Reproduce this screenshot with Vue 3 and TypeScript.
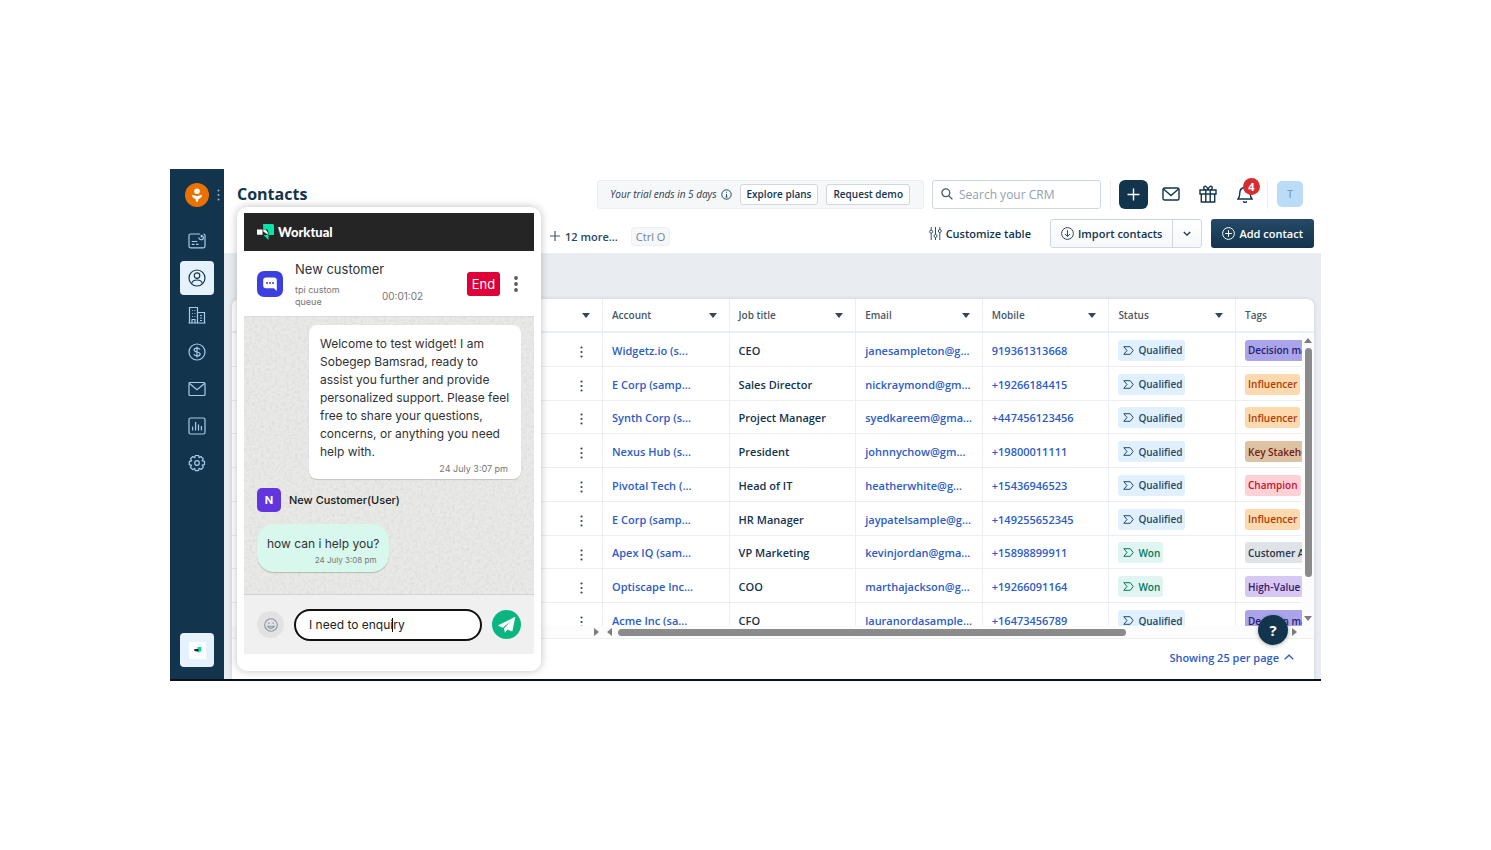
<script setup lang="ts">
import { ref } from 'vue'

interface Contact {
  account: string
  title: string
  email: string
  mobile: string
  status: 'Qualified' | 'Won'
  tag: string
  tone: string
}

const columns = ['Account', 'Job title', 'Email', 'Mobile', 'Status']

const contacts: Contact[] = [
  { account: 'Widgetz.io (s...', title: 'CEO', email: 'janesampleton@g...', mobile: '919361313668', status: 'Qualified', tag: 'Decision maker', tone: 'indigo' },
  { account: 'E Corp (samp...', title: 'Sales Director', email: 'nickraymond@gm...', mobile: '+19266184415', status: 'Qualified', tag: 'Influencer', tone: 'orange' },
  { account: 'Synth Corp (s...', title: 'Project Manager', email: 'syedkareem@gma...', mobile: '+447456123456', status: 'Qualified', tag: 'Influencer', tone: 'orange' },
  { account: 'Nexus Hub (s...', title: 'President', email: 'johnnychow@gm...', mobile: '+19800011111', status: 'Qualified', tag: 'Key Stakeholder', tone: 'brown' },
  { account: 'Pivotal Tech (...', title: 'Head of IT', email: 'heatherwhite@g...', mobile: '+15436946523', status: 'Qualified', tag: 'Champion', tone: 'pink' },
  { account: 'E Corp (samp...', title: 'HR Manager', email: 'jaypatelsample@g...', mobile: '+149255652345', status: 'Qualified', tag: 'Influencer', tone: 'orange' },
  { account: 'Apex IQ (sam...', title: 'VP Marketing', email: 'kevinjordan@gma...', mobile: '+15898899911', status: 'Won', tag: 'Customer Advocate', tone: 'grey' },
  { account: 'Optiscape Inc...', title: 'COO', email: 'marthajackson@g...', mobile: '+19266091164', status: 'Won', tag: 'High-Value', tone: 'violet' },
  { account: 'Acme Inc (sa...', title: 'CFO', email: 'lauranordasample...', mobile: '+16473456789', status: 'Qualified', tag: 'Decision maker', tone: 'indigo' },
]

const search = ref('')
const draft = ref('I need to enquiry')
</script>

<template>
  <div class="page">
    <div class="app">
      <nav class="sidebar" aria-label="Main">
        <div class="brand">
          <svg width="24" height="24" viewBox="0 0 24 24"><circle cx="12" cy="12" r="12" fill="#e97203" /><circle cx="12" cy="8.200" r="2.800" fill="#fff" /><path d="M6.700 11.800c3.200 1.500 7.400 1.500 10.600 0-.3 2.300-1.900 3.700-3.900 4.200l-.5 2.700h-1.800l-.5-2.700c-2-.5-3.600-1.900-3.900-4.200z" fill="#fff" /></svg>
          <svg class="grip" width="3" height="12" viewBox="0 0 3 12" fill="#9db4c8"><circle cx="1.500" cy="1.500" r="1" /><circle cx="1.500" cy="6" r="1" /><circle cx="1.500" cy="10.500" r="1" /></svg>
        </div>
        <a class="item" href="#home" aria-label="Home"><svg width="18" height="18" viewBox="0 0 18 18"><path d="M12 2H2.500C1.500 2 1 2.500 1 3.500v10.800c0 1 .5 1.500 1.500 1.500h13c1 0 1.500-.5 1.500-1.500V3.500C17 2.500 16.500 2 15.500 2M3.800 9.500h5.500M3.800 12.300h2.700M8 12.300h2.500M10.800 5.500c.3 3 4.600 3 4.600 0 0-1.300-.8-2-2.100-2.200V5.500" /></svg></a>
        <a class="item active" href="#contacts" aria-label="Contacts"><svg width="18" height="18" viewBox="0 0 18 18"><circle cx="9" cy="9" r="8" /><circle cx="9" cy="6.600" r="2.800" /><path d="M3.600 14.600c.6-2.600 2.500-3.600 5.400-3.600s4.800 1 5.400 3.600" /></svg></a>
        <a class="item" href="#accounts" aria-label="Accounts"><svg width="18" height="18" viewBox="0 0 18 18"><path d="M.5 17h17M1.500 17V1.500h8V17M9.500 6.500h7V17M4 4.500h.8M6.500 4.500h.8M4 7.500h.8M6.500 7.500h.8M4 10.500h.8M6.500 10.500h.8M4 17v-3.500h3V17M12 9.500h2M12 12h2M12 14.500h2" /></svg></a>
        <a class="item" href="#deals" aria-label="Deals"><svg width="18" height="18" viewBox="0 0 18 18"><circle cx="9" cy="9" r="8" /><path d="M9 3.500v11M12 6.500c-.5-1-1.500-1.400-3-1.400-1.700 0-2.900.7-2.900 1.900 0 2.800 6 1.200 6 4 0 1.200-1.200 2-3 2-1.600 0-2.700-.6-3.200-1.700" /></svg></a>
        <a class="item" href="#email" aria-label="Email"><svg width="18" height="18" viewBox="0 0 18 18"><rect x="1" y="2.500" width="16" height="13" rx="1" /><path d="M1.500 3.500 9 9.800l7.500-6.300" /></svg></a>
        <a class="item" href="#reports" aria-label="Reports"><svg width="18" height="18" viewBox="0 0 18 18"><rect x="1" y="1" width="16" height="16" rx="1.500" /><path d="M4.700 9.500v4M7.600 5v8.500M10.500 7.500v6M13.400 9v4.500" /></svg></a>
        <a class="item" href="#settings" aria-label="Settings"><svg width="18" height="18" viewBox="0 0 18 18"><path d="M7.400 1.500h3.200l.5 2.200 1.900-1.200 2.300 2.300-1.200 1.900 2.400.6v3.300l-2.300.6 1.200 2-2.300 2.300-2-1.200-.6 2.400H7.300l-.6-2.300-2 1.200-2.300-2.300 1.200-2-2.300-.6V7.400l2.300-.6-1.200-2 2.300-2.300 2 1.200z" stroke-linejoin="round" /><circle cx="9" cy="9" r="2.300" /></svg></a>
        <a class="item widget-link" href="#worktual" aria-label="Worktual"><svg width="17" height="17" viewBox="0 0 17 17"><path fill="#fff" d="M0 0h17v17H0z" /><path fill="#06dc9f" d="M8.500 5h3.800v4.500h-2V11l-2-2z" /><path fill="#1c2c35" d="M5.300 7h4.200v2.600H8L5.300 9z" /></svg></a>
      </nav>

      <main class="main">
        <header class="topbar">
          <h1>Contacts</h1>
          <div class="trial">
            <em>Your trial ends in 5 days</em>
            <svg width="11" height="11" viewBox="0 0 11 11" fill="none" stroke="#264966"><circle cx="5.500" cy="5.500" r="4.700" /><path d="M5.500 5v3M5.500 2.800v1M4.500 8h2" /></svg>
            <button type="button">Explore plans</button>
            <button type="button">Request demo</button>
          </div>
          <label class="search">
            <svg width="12" height="12" viewBox="0 0 12 12" fill="none" stroke="#475867" stroke-width="1.300"><circle cx="4.800" cy="4.800" r="3.900" /><path d="m7.700 7.700 3.700 3.700" /></svg>
            <input v-model="search" type="search" placeholder="Search your CRM" aria-label="Search your CRM">
          </label>
          <span class="rule" />
          <button class="plus" type="button" aria-label="Create"><svg width="13" height="13" viewBox="0 0 13 13" stroke="#fff" stroke-width="1.400"><path d="M6.500 .5v12M.5 6.500h12" /></svg></button>
          <button class="icon mail" type="button" aria-label="Mail"><svg width="18" height="14" viewBox="0 0 18 14"><rect x="1" y="1" width="16" height="12" rx="1.500" /><path d="M1.500 2 9 8.500 16.500 2" /></svg></button>
          <button class="icon gift" type="button" aria-label="Gifts"><svg width="18" height="18" viewBox="0 0 18 18"><path d="M1 5h16v4H1zM2.300 9h13.400v8H2.300zM6.800 5v12M11.200 5v12M9 5C5.500 5 4.500 4 4.800 2.500 5.300.5 8.300.5 9 5c.7-4.500 3.700-4.500 4.200-2.500C13.500 4 12.500 5 9 5z" /></svg></button>
          <button class="icon bell" type="button" aria-label="Notifications, 4 new"><svg width="16" height="18" viewBox="0 0 16 18"><path d="M1 14c1.600-1.500 1.800-2.800 1.800-6C2.800 4.500 5 2.500 8 2.500s5.200 2 5.200 5.500c0 3.200.2 4.500 1.800 6zM6 16.500c1 .8 3 .8 4 0" /></svg><span class="badge">4</span></button>
          <span class="rule second" />
          <button class="avatar" type="button" aria-label="Profile">T</button>
        </header>

        <div class="toolbar">
          <button class="more" type="button"><svg width="10" height="10" viewBox="0 0 10 10" stroke="#475867" stroke-width="1.200"><path d="M5 0v10M0 5h10" /></svg>12 more...</button>
          <kbd>Ctrl O</kbd>
          <button class="customize" type="button"><svg width="13" height="13" viewBox="0 0 13 13" fill="none" stroke="#33536d"><path d="M2.200 0v3.200M2.200 6.200V13M6.500 0v7.500M6.500 10.500V13M10.800 0v2.500M10.800 5.500V13" /><circle cx="2.200" cy="4.700" r="1.500" /><circle cx="6.500" cy="9" r="1.500" /><circle cx="10.800" cy="4" r="1.500" /></svg>Customize table</button>
          <div class="split">
            <button type="button"><svg width="13" height="13" viewBox="0 0 13 13" fill="none" stroke="#33475b"><circle cx="6.500" cy="6.500" r="5.900" /><path d="M6.500 3.200v6M4 7l2.500 2.500L9 7" /></svg>Import contacts</button>
            <button class="drop" type="button" aria-label="More import options"><svg width="8" height="6" viewBox="0 0 8 6" fill="none" stroke="#12344d" stroke-width="1.300"><path d="m.8 1 3.200 3.200L7.200 1" /></svg></button>
          </div>
          <button class="add" type="button"><svg width="13" height="13" viewBox="0 0 13 13" fill="none" stroke="#fff"><circle cx="6.500" cy="6.500" r="5.900" /><path d="M6.500 3.200v6.600M3.200 6.500h6.600" /></svg>Add contact</button>
        </div>

        <div class="canvas">
          <section class="card">
            <div class="viewport">
              <table>
                <colgroup><col class="name-col"><col v-for="c in columns" :key="c"><col class="tag-col"></colgroup>
                <thead>
                  <tr>
                    <th aria-label="Name"><span class="head"><i class="caret" /></span></th>
                    <th v-for="c in columns" :key="c"><span class="head">{{ c }}<i class="caret" /></span></th>
                    <th>Tags</th>
                  </tr>
                </thead>
                <tbody>
                  <tr v-for="(p, i) in contacts" :key="i">
                    <td class="menu-cell"><button type="button" aria-label="Row actions"><svg width="3" height="12" viewBox="0 0 3 12" fill="#33475b"><circle cx="1.500" cy="1.500" r="1.100" /><circle cx="1.500" cy="6" r="1.100" /><circle cx="1.500" cy="10.500" r="1.100" /></svg></button></td>
                    <td><a href="#account">{{ p.account }}</a></td>
                    <td>{{ p.title }}</td>
                    <td><a href="#email">{{ p.email }}</a></td>
                    <td><a href="#call">{{ p.mobile }}</a></td>
                    <td><span class="status" :class="p.status.toLowerCase()"><svg width="11" height="9" viewBox="0 0 11 9" fill="none" stroke="currentColor"><path d="M.8.700h6.400L10.200 4.500 7.200 8.300H.8L4 4.500z" /></svg>{{ p.status }}</span></td>
                    <td><span class="tag" :class="p.tone">{{ p.tag }}</span></td>
                  </tr>
                </tbody>
              </table>
              <div class="vscroll"><i class="up" /><i class="thumb" /><i class="down" /></div>
            </div>
            <div class="hscroll"><i class="right" /><i class="left" /><i class="thumb" /><i class="rest" /><i class="right" /></div>
            <footer class="pager"><button type="button">Showing 25 per page<svg width="10" height="6" viewBox="0 0 10 6" fill="none" stroke="#2c5cc5" stroke-width="1.300"><path d="m.7 5.200 4.300-4 4.300 4" /></svg></button></footer>
            <button class="help" type="button" aria-label="Help">?</button>
          </section>
        </div>
      </main>

      <aside class="chat" aria-label="Chat">
        <div class="chat-brand">
          <svg width="17" height="16" viewBox="0 0 17 16"><path fill="#06e5a5" d="M6 0h9.500c.8 0 1.500.7 1.500 1.500V11h-5.500v5L6.500 11z" /><path fill="#252525" d="M5 5.500h5.500c1 2 1 3.500 1 5.500L5 11z" /><path fill="#fff" d="M0 5.500h5.500v5.200H0zM6.300 5.500c3.200 0 4.700 2 4.700 5.200L6.300 7.500z" /></svg>
          <strong>Worktual</strong>
        </div>
        <div class="chat-head">
          <svg width="26" height="26" viewBox="0 0 26 26"><rect width="26" height="26" rx="7" fill="#3b3fe0" /><path d="M9 6.500h8c1.800 0 2.800 1 2.800 2.800v10.600l-2.900-2.600H9c-1.800 0-2.800-1-2.800-2.800V9.300c0-1.800 1-2.800 2.800-2.800z" fill="#fff" /><g fill="#3b3fe0"><circle cx="10" cy="12" r="1" /><circle cx="13" cy="12" r="1" /><circle cx="16" cy="12" r="1" /></g></svg>
          <div class="who">
            <h2>New customer</h2>
            <div class="meta"><span>tpi custom queue</span><time>00:01:02</time></div>
          </div>
          <button class="end" type="button">End</button>
          <button class="dots" type="button" aria-label="More"><svg width="4" height="16" viewBox="0 0 4 16" fill="#5b5b5b"><circle cx="2" cy="2" r="1.900" /><circle cx="2" cy="8" r="1.900" /><circle cx="2" cy="14" r="1.900" /></svg></button>
        </div>
        <div class="thread">
          <svg class="grain" width="100%" height="100%" aria-hidden="true"><filter id="grain"><feTurbulence type="fractalNoise" baseFrequency="0.35" numOctaves="2" seed="4" /><feColorMatrix values="0 0 0 0 .45  0 0 0 0 .45  0 0 0 0 .43  .5 0 0 0 -.2" /></filter><rect width="100%" height="100%" filter="url(#grain)" /></svg>
          <div class="bubble agent">
            <p>Welcome to test widget! I am Sobegep Bamsrad, ready to assist you further and provide personalized support. Please feel free to share your questions, concerns, or anything you need help with.</p>
            <time>24 July 3:07 pm</time>
          </div>
          <div class="sender"><span class="initial">N</span>New Customer(User)</div>
          <div class="bubble user">
            <p>how can i help you?</p>
            <time>24 July 3:08 pm</time>
          </div>
        </div>
        <form class="composer" @submit.prevent>
          <button class="emoji" type="button" aria-label="Emoji"><svg width="14" height="14" viewBox="0 0 14 14" fill="none" stroke="#8a949e" stroke-width="1.100"><circle cx="7" cy="7" r="6.300" /><path d="M3.800 8.300c1 2.700 5.400 2.700 6.400 0z" /><path d="M4.800 4.500v1.300M9.200 4.500v1.300" stroke-width="1.500" /></svg></button>
          <div class="field"><input v-model="draft" type="text" aria-label="Message"><i class="cursor" /></div>
          <button class="send" type="submit" aria-label="Send"><svg width="19" height="18" viewBox="0 0 19 18" fill="#fff"><path d="M18.300.8 15.300 15.500l-4.800-2-2.600 3.300-.9-4.300 7-7.500-8.200 6.700L.8 9.600z" /></svg></button>
        </form>
      </aside>
    </div>
  </div>
</template>

<style>
body {
  margin: 0;
  background: #fff;
}
</style>

<style scoped>
* {
  box-sizing: border-box;
}

.page {
  padding: 169px 170px;
  font-family: "Open Sans", "Noto Sans", sans-serif;
  font-size: 11px;
  font-weight: 600;
  color: #12344d;
}

button {
  display: inline-flex;
  align-items: center;
  justify-content: center;
  margin: 0;
  padding: 0;
  border: 0;
  background: none;
  color: inherit;
  font: inherit;
  white-space: nowrap;
}

a {
  color: #2c5cc5;
  text-decoration: none;
}

svg {
  display: block;
  flex: none;
}

.app {
  position: relative;
  display: flex;
  border-bottom: 2px solid #0b1119;
}

.sidebar {
  display: flex;
  flex: none;
  flex-direction: column;
  align-items: center;
  gap: 3px;
  width: 54px;
  padding-bottom: 12px;
  background: #12344d;
}

.brand {
  position: relative;
  display: flex;
  align-items: center;
  justify-content: center;
  width: 100%;
  height: 52px;
}

.grip {
  position: absolute;
  right: 4px;
}

.item {
  display: flex;
  align-items: center;
  justify-content: center;
  width: 34px;
  height: 34px;
  border-radius: 4px;
}

.item svg {
  fill: none;
  stroke: #a9cbea;
  stroke-width: 1.2;
}

.item.active,
.widget-link {
  background: #e5f2fd;
}

.item.active svg {
  stroke: #12344d;
}

.widget-link {
  margin-top: auto;
}

.widget-link svg {
  stroke: none;
}

.main {
  flex: 1;
  min-width: 0;
}

.topbar {
  display: flex;
  align-items: center;
  height: 50px;
  padding: 0 18px 0 13px;
}

h1 {
  margin: 0 auto 0 0;
  font-size: 16px;
  font-weight: 700;
}

.trial {
  display: flex;
  align-items: center;
  height: 29px;
  padding: 0 13px 0 12px;
  border: 1px solid #ebeff3;
  border-radius: 3px;
  background: #f5f7f9;
}

.trial em {
  margin-right: 4px;
  color: #313b45;
  font-size: 10px;
  font-weight: 500;
}

.trial button {
  height: 21px;
  margin-left: 8px;
  padding: 0 6px;
  border: 1px solid #cfd7df;
  border-radius: 3px;
  background: #fff;
  font-size: 10px;
}

.search {
  display: flex;
  align-items: center;
  gap: 6px;
  width: 169px;
  height: 29px;
  margin: 0 9px 0 8px;
  padding: 0 8px;
  border: 1px solid #cfd7df;
  border-radius: 3px;
}

.search input {
  flex: 1;
  min-width: 0;
  padding: 0;
  border: 0;
  outline: 0;
  background: none;
  color: inherit;
  font: inherit;
  font-size: 12px;
  font-weight: 400;
}

.search input::placeholder {
  color: #92a2b1;
  opacity: 1;
}

.rule {
  width: 1px;
  height: 29px;
  margin-right: 8px;
  background: #ebeff3;
}

.rule.second {
  margin: 0 9px 0 14px;
}

.plus {
  width: 29px;
  height: 29px;
  border-radius: 6px;
  background: #12344d;
}

.icon svg {
  fill: none;
  stroke: #12344d;
  stroke-width: 1.4;
}

.mail {
  margin-left: 14px;
}

.gift {
  margin-left: 19px;
}

.bell {
  position: relative;
  margin-left: 20px;
}

.badge {
  position: absolute;
  top: -7px;
  right: -7px;
  width: 17px;
  height: 17px;
  border-radius: 50%;
  background: #d72d30;
  color: #fff;
  font-size: 11px;
  font-weight: 700;
  line-height: 17px;
}

.avatar {
  width: 26px;
  height: 26px;
  border-radius: 5px;
  background: #bbdcf9;
  color: #7d9fc0;
  font-size: 10px;
}

.toolbar {
  display: flex;
  height: 34px;
  padding: 0 7px 5px 326px;
}

.more {
  gap: 5px;
  height: 34px;
  color: #264966;
}

kbd {
  height: 19px;
  margin: 8px auto 0 13px;
  padding: 0 4px;
  border: 1px solid #ebeff3;
  border-radius: 4px;
  background: #f5f7f9;
  color: #6f8497;
  font: 400 11px/17px "Open Sans", "Noto Sans", sans-serif;
}

.customize {
  gap: 4px;
  height: 29px;
  margin-right: 19px;
}

.split {
  display: flex;
  height: 29px;
  margin-right: 9px;
  border: 1px solid #cfd7df;
  border-radius: 3px;
  background: linear-gradient(#fff, #f5f7f9);
}

.split button {
  gap: 4px;
  padding: 0 10px;
}

.split .drop {
  width: 29px;
  padding: 0;
  border-left: 1px solid #cfd7df;
}

.add {
  gap: 4px;
  height: 29px;
  padding: 0 11px;
  border-radius: 3px;
  background: linear-gradient(#264966, #12344d);
  color: #fff;
}

.canvas {
  padding: 46px 7px 0 8px;
  background: #e9ecf1;
}

.card {
  position: relative;
  border-radius: 7px 7px 0 0;
  background: #fff;
  box-shadow: 0 0 4px rgb(24 50 71 / 14%);
}

.viewport {
  position: relative;
  height: 327px;
  overflow: hidden;
  border-radius: 7px 7px 0 0;
}

table {
  width: 100%;
  height: 338px;
  table-layout: fixed;
  border-collapse: separate;
  border-spacing: 0;
}

.name-col {
  width: 370px;
}

.tag-col {
  width: 79px;
}

th,
td {
  padding: 0 0 0 9px;
  border-bottom: 1px solid #ebeff3;
  border-left: 1px solid #ebeff3;
  text-align: left;
  white-space: nowrap;
}

td {
  padding-top: 2px;
}

th {
  height: 34px;
  border-bottom-width: 2px;
  color: #475867;
  font-size: 10px;
  font-weight: 600;
}

th:first-child,
td:first-child {
  border-left: 0;
}

.head {
  display: flex;
  align-items: center;
  padding-right: 12px;
}

.caret {
  margin-left: auto;
  border: 4px solid transparent;
  border-top: 5px solid #33475b;
  border-bottom: 0;
}

.menu-cell {
  padding-right: 19px;
  text-align: right;
}

.menu-cell button {
  vertical-align: middle;
}

.status,
.tag {
  display: inline-flex;
  align-items: center;
  height: 21px;
  border-radius: 3px;
  font-size: 10px;
  vertical-align: middle;
}

.status {
  gap: 4px;
  padding: 0 3px 0 5px;
}

.qualified {
  background: #e0f0ff;
  color: #264966;
}

.won {
  background: #e0f5f1;
  color: #00795b;
}

.tag {
  padding: 0 3px;
}

.indigo {
  background: #aaa5ea;
  color: #2d1b69;
}

.orange {
  background: #fdd9b0;
  color: #ae3f09;
}

.brown {
  background: #ddc3a4;
  color: #741b13;
}

.pink {
  background: #ffd0d6;
  color: #c8102e;
}

.grey {
  background: #dfe3e7;
  color: #283848;
}

.violet {
  background: #d6c8f2;
  color: #33186b;
}

.vscroll {
  position: absolute;
  top: 34px;
  right: 0;
  bottom: 0;
  display: flex;
  flex-direction: column;
  align-items: center;
  width: 12px;
  padding: 5px 0;
  background: #fcfcfc;
}

.vscroll .thumb {
  width: 7px;
  height: 229px;
  margin: 5px 0 auto;
  border-radius: 4px;
  background: #8b8b8b;
}

.up,
.down {
  border: 4px solid transparent;
}

.up {
  border-top: 0;
  border-bottom: 5px solid #7c7c7c;
}

.down {
  border-top: 5px solid #7c7c7c;
  border-bottom: 0;
}

.hscroll {
  display: flex;
  align-items: center;
  height: 13px;
  padding: 0 17px 0 362px;
  border-bottom: 1px solid #f0f0f0;
  background: #fcfcfc;
}

.left,
.right {
  border: 4px solid transparent;
}

.right {
  border-right: 0;
  border-left: 5px solid #7c7c7c;
}

.left {
  margin: 0 6px 0 8px;
  border-right: 5px solid #7c7c7c;
  border-left: 0;
}

.hscroll .thumb {
  flex: 506;
  height: 7px;
  border-radius: 4px;
  background: #8b8b8b;
}

.rest {
  flex: 166;
}

.pager {
  display: flex;
  align-items: center;
  justify-content: flex-end;
  height: 40px;
  padding: 0 20px 4px 0;
}

.pager button {
  gap: 5px;
  color: #2c5cc5;
}

.help {
  position: absolute;
  right: 26px;
  bottom: 34px;
  width: 30px;
  height: 30px;
  border-radius: 50%;
  background: #12344d;
  box-shadow: 0 1px 4px rgb(0 0 0 / 30%);
  color: #fff;
  font-size: 15px;
  font-weight: 700;
}

.chat {
  position: absolute;
  top: 38px;
  left: 67px;
  width: 304px;
  padding: 6px 7px 17px;
  border-radius: 10px;
  background: #fff;
  box-shadow: 0 0 8px rgb(0 0 0 / 25%);
  color: #303235;
  font-family: Inter, "Noto Sans", sans-serif;
  font-weight: 400;
}

.chat-brand {
  display: flex;
  align-items: center;
  gap: 4px;
  height: 38px;
  padding-left: 13px;
  background: #252525;
  color: #fff;
  font-family: Lato, sans-serif;
  font-size: 13px;
}

.chat-brand strong {
  font-weight: 900;
}

.chat-head {
  display: flex;
  align-items: center;
  height: 65px;
  padding: 0 16px 0 13px;
}

.who {
  flex: 1;
  margin-left: 12px;
}

h2 {
  margin: 0;
  font-size: 13px;
  font-weight: 400;
  line-height: 18px;
}

.meta {
  display: flex;
  align-items: center;
  gap: 27px;
  margin-top: 6px;
  color: #757575;
  font-size: 9px;
  line-height: 12px;
}

.meta span {
  width: 60px;
}

.meta time {
  font-size: 10px;
}

.end {
  width: 33px;
  height: 24px;
  margin-right: 14px;
  border-radius: 3px;
  background: #df0039;
  color: #fff;
  font-size: 13px;
}

.thread {
  position: relative;
  display: flex;
  flex-direction: column;
  align-items: flex-start;
  height: 279px;
  padding: 8px 13px;
  border-top: 1px solid #dcdcdc;
  border-bottom: 1px solid #d2d2d2;
  background: #e9e9e7;
}

.grain {
  position: absolute;
  inset: 0;
}

.bubble,
.sender {
  position: relative;
}

.bubble p {
  margin: 0;
  font-size: 12px;
}

.bubble time {
  display: block;
  color: #757575;
  text-align: right;
}

.agent {
  align-self: flex-end;
  width: 212px;
  padding: 10px 8px 3px 11px;
  border-radius: 8px;
  background: #fff;
  box-shadow: 0 1px 1px rgb(0 0 0 / 16%);
}

.agent p {
  line-height: 18px;
}

.agent time {
  padding-right: 5px;
  font-size: 9px;
  line-height: 15px;
}

.sender {
  display: flex;
  align-items: center;
  gap: 8px;
  margin: 9px 0 12px;
  color: #17181a;
  font-size: 11px;
  font-weight: 500;
}

.initial {
  width: 24px;
  height: 24px;
  border-radius: 5px;
  background: #6236df;
  color: #fff;
  font-weight: 700;
  line-height: 24px;
  text-align: center;
}

.user {
  padding: 11px 10px 5px;
  border-radius: 17px;
  background: #d9f8ed;
  box-shadow: 0 1px 1px rgb(0 0 0 / 20%);
}

.user p {
  line-height: 18px;
}

.user time {
  padding-right: 3px;
  font-size: 8px;
  line-height: 14px;
}

.composer {
  display: flex;
  align-items: center;
  height: 59px;
  padding: 0 13px;
  background: #f0f0f1;
}

.emoji {
  width: 27px;
  height: 27px;
  border-radius: 50%;
  background: #e2e2e2;
}

.field {
  position: relative;
  flex: 1;
  margin: 0 10px;
}

.field input {
  width: 100%;
  height: 32px;
  padding: 0 13px;
  border: 2px solid #111;
  border-radius: 16px;
  outline: 0;
  background: #fff;
  color: #222;
  font: inherit;
  font-size: 12px;
}

.cursor {
  position: absolute;
  top: 9px;
  left: 98px;
  width: 1px;
  height: 14px;
  background: #111;
}

.send {
  width: 29px;
  height: 29px;
  border-radius: 50%;
  background: #09b682;
}
</style>
